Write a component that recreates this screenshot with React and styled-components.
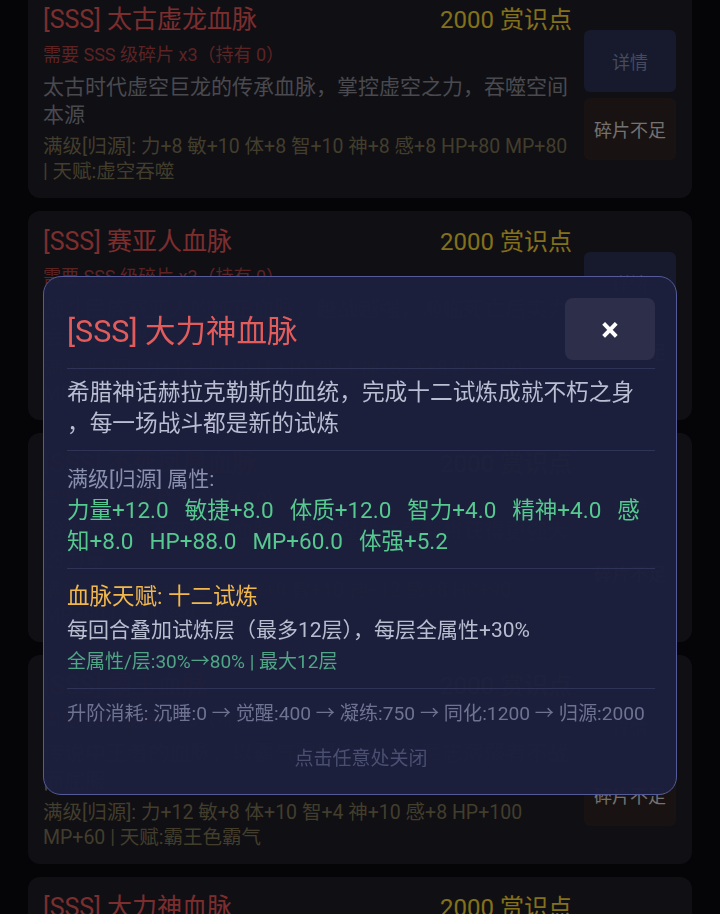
import React from 'react';
import styled, { createGlobalStyle } from 'styled-components';

const Global = createGlobalStyle`
  html, body {
    margin: 0;
    padding: 0;
    background: #0a0a0d;
    overflow: hidden;
  }
  body {
    font-family: Roboto, "Noto Sans CJK SC", sans-serif;
  }
`;

const Page = styled.div`
  height: 914px;
  overflow: hidden;
  padding: 0 28px;
  background: #0a0a0d;
`;

const List = styled.div`
  display: flex;
  flex-direction: column;
  gap: 13px;
  margin-top: -11px;
`;

const Card = styled.div`
  display: flex;
  align-items: center;
  gap: 12px;
  padding: 16px 16px 14px 15px;
  background: #1c1c26;
  border-radius: 12px;
`;

const Info = styled.div`
  flex: 1;
  min-width: 0;
`;

const CardHead = styled.div`
  display: flex;
  justify-content: space-between;
  align-items: center;
  line-height: 30px;
`;

const CardName = styled.span`
  font-size: 25px;
  color: #e05555;
`;

const Price = styled.span`
  font-size: 24px;
  color: #efcc30;
`;

const Need = styled.div`
  margin-top: 8px;
  font-size: 18px;
  line-height: 24px;
  color: #a84040;
`;

const CardDesc = styled.div`
  margin-top: 6px;
  font-size: 21px;
  line-height: 28px;
  color: #86868f;
`;

const CardStats = styled.div`
  margin-top: 5px;
  font-size: 19.5px;
  line-height: 25px;
  color: #7a7050;
`;

const Actions = styled.div`
  display: flex;
  flex-direction: column;
  gap: 6px;
`;

const SmallBtn = styled.button`
  width: 92px;
  height: 62px;
  border: none;
  border-radius: 6px;
  font-family: inherit;
  font-size: 18px;
  background: ${p => (p.$warn ? '#2f2222' : '#283050')};
  color: ${p => (p.$warn ? '#cfcfcf' : '#7e87ae')};
`;

const Backdrop = styled.div`
  position: fixed;
  inset: 0;
  background: rgba(0, 0, 0, 0.45);
  display: flex;
  justify-content: center;
  align-items: flex-start;
  padding-top: 276px;
`;

const Modal = styled.div`
  width: 634px;
  box-sizing: border-box;
  padding: 21px 21px 23px 23px;
  background: rgba(28, 31, 60, 0.985);
  border: 1px solid #555a98;
  border-radius: 18px;
`;

const ModalHead = styled.div`
  display: flex;
  justify-content: space-between;
  align-items: center;
  padding-bottom: 8px;
  border-bottom: 1px solid #2f3358;
`;

const ModalTitle = styled.h2`
  margin: 0;
  font-size: 30.5px;
  font-weight: 400;
  color: #e25c5c;
`;

const CloseBtn = styled.button`
  width: 90px;
  height: 62px;
  border: none;
  border-radius: 8px;
  background: #2c2e4a;
  color: #ffffff;
  font-family: inherit;
  font-size: 33px;
  font-weight: 700;
  line-height: 1;
`;

const Section = styled.div`
  padding: ${p => p.$pad || '14px 0 12px'};
  border-bottom: ${p => (p.$last ? 'none' : '1px solid #2f3358')};
`;

const Lore = styled.div`
  font-size: 22.7px;
  line-height: 31px;
  color: #b9bed2;
  line-break: anywhere;
`;

const Label = styled.div`
  font-size: 21px;
  line-height: 26px;
  color: #8a90b0;
`;

const StatLine = styled.div`
  margin-top: 3px;
  font-size: 22.5px;
  line-height: 31px;
  color: #55c990;
`;

const Stat = styled.span`
  margin-right: 16px;
`;

const TalentName = styled.div`
  font-size: 22.5px;
  line-height: 28px;
  color: #f2b84b;
`;

const TalentText = styled.div`
  margin-top: 6px;
  font-size: 21px;
  line-height: 28px;
  color: #b8bdd0;
`;

const TalentNote = styled.div`
  margin-top: 6px;
  font-size: 19px;
  line-height: 24px;
  color: #4fa585;
`;

const Cost = styled.div`
  font-size: 19.2px;
  line-height: 26px;
  color: #6e7392;
`;

const Hint = styled.div`
  margin-top: 20px;
  text-align: center;
  font-size: 19px;
  line-height: 24px;
  color: #4a4f72;
`;

const bloodlines = [
  {
    name: '太古虚龙血脉',
    desc: '太古时代虚空巨龙的传承血脉，掌控虚空之力，吞噬空间本源',
    stats: '满级[归源]: 力+8 敏+10 体+8 智+10 神+8 感+8 HP+80 MP+80 | 天赋:虚空吞噬',
  },
  {
    name: '赛亚人血脉',
    desc: '战斗民族赛亚人的纯正血脉，越战越强，濒临死亡后实力会大幅暴涨',
    stats: '满级[归源]: 力+12 敏+10 体+10 智+4 神+6 感+8 HP+100 MP+60 | 天赋:超级赛亚人',
  },
  {
    name: '不死凤凰血脉',
    desc: '浴火重生的不死神鸟血脉，每次涅槃之后都将获得更强大的力量',
    stats: '满级[归源]: 力+6 敏+10 体+8 智+10 神+12 感+8 HP+90 MP+90 | 天赋:浴火涅槃',
  },
  {
    name: '霸王血脉',
    desc: '传说中王者的血脉，以霸气震慑众生，令意志薄弱者不战而屈服',
    stats: '满级[归源]: 力+12 敏+8 体+10 智+4 神+10 感+8 HP+100 MP+60 | 天赋:霸王色霸气',
  },
  {
    name: '大力神血脉',
    desc: '希腊神话赫拉克勒斯的血统，完成十二试炼成就不朽之身，每一场战斗都是新的试炼',
    stats: '满级[归源]: 力+12 敏+8 体+12 智+4 神+4 感+8 HP+88 MP+60 | 天赋:十二试炼',
  },
];

const fullStats = ['力量+12.0', '敏捷+8.0', '体质+12.0', '智力+4.0', '精神+4.0', '感知+8.0', 'HP+88.0', 'MP+60.0', '体强+5.2'];

const BloodCard = ({ item }) => (
  <Card>
    <Info>
      <CardHead>
        <CardName>[SSS] {item.name}</CardName>
        <Price>2000 赏识点</Price>
      </CardHead>
      <Need>需要 SSS 级碎片 x3（持有 0）</Need>
      <CardDesc>{item.desc}</CardDesc>
      <CardStats>{item.stats}</CardStats>
    </Info>
    <Actions>
      <SmallBtn>详情</SmallBtn>
      <SmallBtn $warn>碎片不足</SmallBtn>
    </Actions>
  </Card>
);

export default function App() {
  return (
    <>
      <Global />
      <Page>
        <List>
          {bloodlines.map(b => (
            <BloodCard key={b.name} item={b} />
          ))}
        </List>
      </Page>
      <Backdrop>
        <Modal>
          <ModalHead>
            <ModalTitle>[SSS] 大力神血脉</ModalTitle>
            <CloseBtn>×</CloseBtn>
          </ModalHead>
          <Section $pad="8px 0 11px">
            <Lore>希腊神话赫拉克勒斯的血统，完成十二试炼成就不朽之身，每一场战斗都是新的试炼</Lore>
          </Section>
          <Section $pad="15px 0 11px">
            <Label>满级[归源] 属性:</Label>
            <StatLine>
              {fullStats.map(s => (
                <Stat key={s}>{s}</Stat>
              ))}
            </StatLine>
          </Section>
          <Section $pad="13px 0 14px">
            <TalentName>血脉天赋: 十二试炼</TalentName>
            <TalentText>每回合叠加试炼层（最多12层），每层全属性+30%</TalentText>
            <TalentNote>全属性/层:30%→80% | 最大12层</TalentNote>
          </Section>
          <Section $pad="12px 0 0" $last>
            <Cost>升阶消耗: 沉睡:0 → 觉醒:400 → 凝练:750 → 同化:1200 → 归源:2000</Cost>
          </Section>
          <Hint>点击任意处关闭</Hint>
        </Modal>
      </Backdrop>
    </>
  );
}
